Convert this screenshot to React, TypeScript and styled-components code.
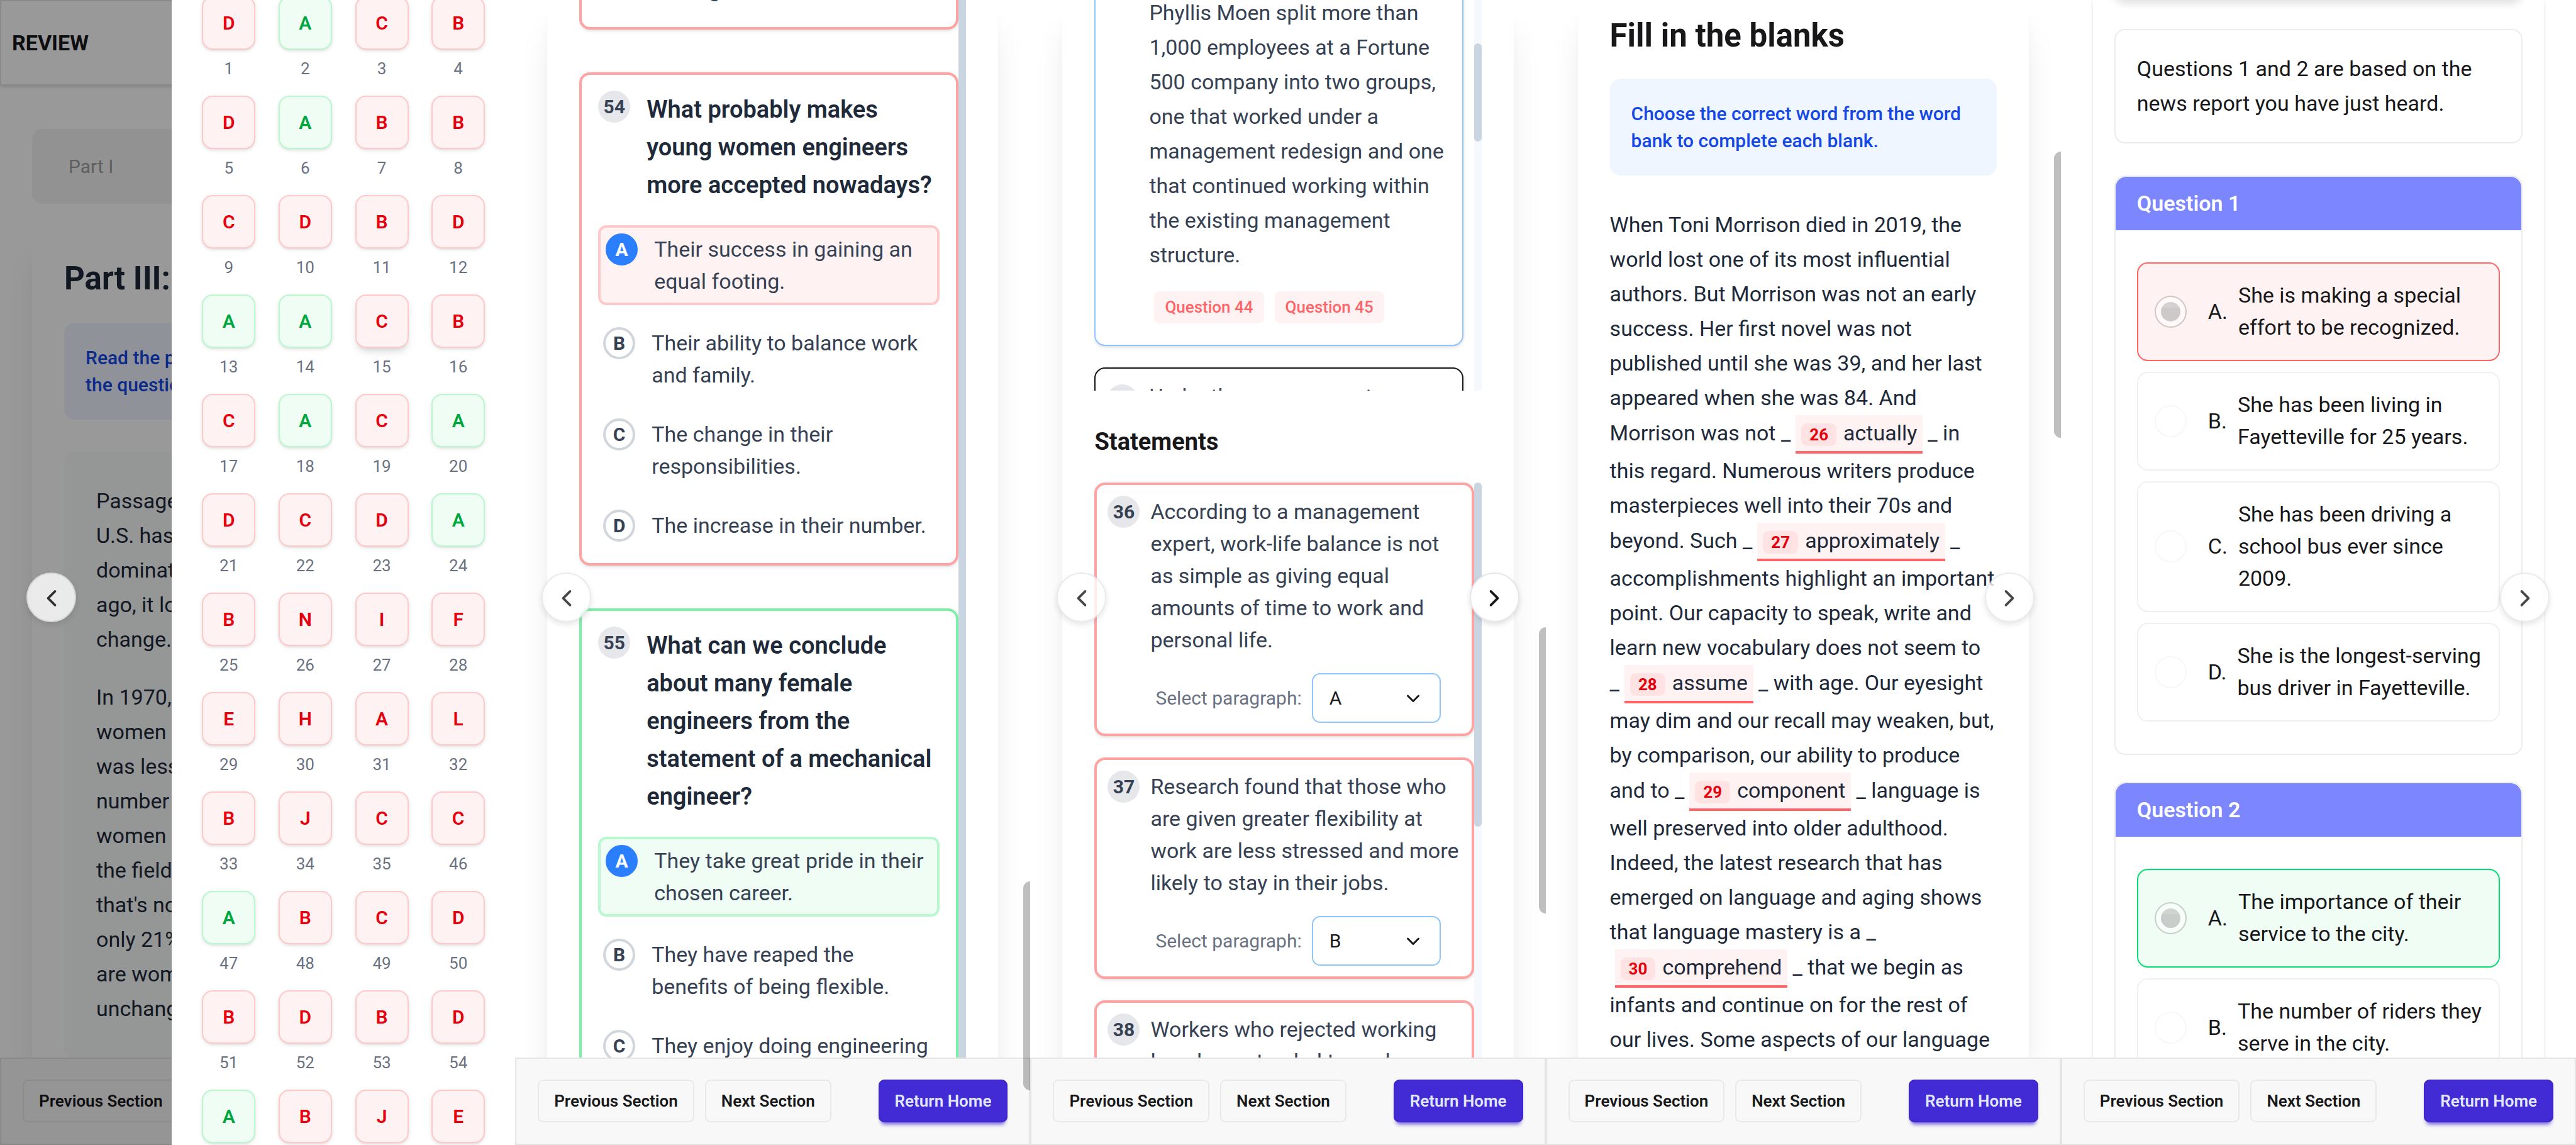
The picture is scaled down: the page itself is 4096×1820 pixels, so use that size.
import React from 'react';
import styled, { createGlobalStyle, css } from 'styled-components';

type Tone = 'wrong' | 'right' | 'plain';

const ink = {
  base: '#18181b',
  heading: '#1e2939',
  body: '#364153',
  muted: '#6a7282',
};

const GlobalStyle = createGlobalStyle`
  * { box-sizing: border-box; }
  body {
    margin: 0;
    background: #ffffff;
    color: ${ink.base};
    font-family: Roboto, "Liberation Sans", sans-serif;
    font-size: 34px;
    line-height: 55px;
  }
  h1, h2, h3, p { margin: 0; }
  button, select, input { font-family: inherit; margin: 0; }
`;

const softShadow = '0 2px 6px rgba(0,0,0,.1), 0 2px 4px -2px rgba(0,0,0,.1)';

/* ---------- page frame ---------- */

const Board = styled.main`
  display: grid;
  grid-template-columns: repeat(5, minmax(0, 1fr));
  height: 100vh;
  overflow: hidden;
`;

const Screen = styled.section`
  position: relative;
  display: flex;
  flex-direction: column;
  min-width: 0;
  height: 100vh;
  overflow: hidden;
`;

const View = styled.div`
  flex: 1;
  min-height: 0;
  overflow: hidden;
  display: flex;
  flex-direction: column;
`;

const Sheet = styled.div<{ $flat?: boolean; $rounded?: boolean }>`
  flex: 1 0 auto;
  margin: 0 51px;
  padding: 0 ${p => (p.$flat ? 34 : 51)}px;
  background: #fff;
  border-radius: ${p => (p.$rounded ? '34px 34px 0 0' : '0')};
  box-shadow: ${p =>
    p.$flat
      ? '0 2px 6px rgba(0,0,0,.1), 0 2px 4px -2px rgba(0,0,0,.1)'
      : '0 43px 53px -11px rgba(0,0,0,.1), 0 17px 21px -13px rgba(0,0,0,.1)'};
`;

const Footer = styled.footer`
  display: flex;
  align-items: center;
  gap: 17px;
  padding: 33px 34px 34px;
  background: #f8f8f8;
  border: 2px solid #e5e5e5;
`;

const FootButton = styled.button<{ $primary?: boolean }>`
  height: 68px;
  padding: 0 24px;
  border: 2px solid #e9e9ea;
  border-radius: 9px;
  background: #f8f8f8;
  color: ${ink.base};
  font-size: 26px;
  font-weight: 600;
  line-height: 34px;
  white-space: nowrap;
  ${p =>
    p.$primary &&
    css`
      margin-left: auto;
      background: #422ad5;
      border-color: #3d27c6;
      color: #e0e7ff;
      box-shadow: 0 6px 6px -4px rgba(66, 42, 213, .6), 0 8px 6px -5px rgba(66, 42, 213, .4);
    `}
`;

const RoundNav = styled.button<{ $side: 'left' | 'right'; $active?: boolean }>`
  position: absolute;
  top: 910px;
  ${p => p.$side}: 42px;
  display: grid;
  place-items: center;
  width: 79px;
  height: 79px;
  padding: 0;
  border: 2px solid #e5e7eb;
  border-radius: 50%;
  background: #fff;
  color: ${ink.base};
  opacity: ${p => (p.$active ? 1 : 0.8)};
  box-shadow: 0 4px 8px rgba(0,0,0,.12);
  z-index: 3;
`;

const Grip = styled.div<{ $top: number; $height: number }>`
  position: absolute;
  right: 0;
  top: ${p => p.$top}px;
  width: 11px;
  height: ${p => p.$height}px;
  border-radius: 11px 0 0 11px;
  background: rgba(0, 0, 0, .25);
  z-index: 3;
`;

const Chevron = ({ dir }: { dir: 'left' | 'right' }) => (
  <svg
    width="44"
    height="44"
    viewBox="0 0 24 24"
    fill="none"
    stroke="currentColor"
    strokeWidth="2"
    strokeLinecap="round"
    strokeLinejoin="round"
  >
    <path d={dir === 'left' ? 'M15 6.500l-6 6 6 6' : 'M9 6.500l6 6-6 6'} />
  </svg>
);

const Nav = ({ side, active }: { side: 'left' | 'right'; active?: boolean }) => (
  <RoundNav $side={side} $active={active} aria-label={side === 'left' ? 'Previous part' : 'Next part'}>
    <Chevron dir={side} />
  </RoundNav>
);

const Actions = () => (
  <Footer>
    <FootButton>Previous Section</FootButton>
    <FootButton>Next Section</FootButton>
    <FootButton $primary>Return Home</FootButton>
  </Footer>
);

/* ---------- shared text blocks ---------- */

const Title = styled.h1<{ $tone?: string }>`
  font-size: 51px;
  line-height: 68px;
  font-weight: 700;
  color: ${p => p.$tone ?? ink.base};
  white-space: nowrap;
`;

const Notice = styled.p`
  padding: 34px;
  border-radius: 17px;
  background: #eff6ff;
  color: #1447e6;
  font-size: 30px;
  line-height: 43px;
  font-weight: 500;
`;

const Badge = styled.span`
  flex: none;
  width: 51px;
  height: 51px;
  border-radius: 50%;
  background: #e5e7eb;
  color: ${ink.body};
  font-size: 30px;
  font-weight: 700;
  line-height: 51px;
  text-align: center;
`;

const Track = styled.div`
  flex: none;
  width: 12px;
  background: #f5f9fd;
`;

const Thumb = styled.div<{ $offset: number; $height?: number }>`
  margin-top: ${p => p.$offset}px;
  height: ${p => (p.$height ? `${p.$height}px` : '100%')};
  border-radius: ${p => (p.$height ? '6px' : '0')};
  background: #cad5e2;
`;

/* ---------- screen 1: answer drawer ---------- */

const TopBar = styled.header`
  padding: 38px 17px;
  border: 2px solid #e5e5e5;
  background: #fff;
  box-shadow: ${softShadow};
  font-weight: 700;
  line-height: 56px;
`;

const TabStrip = styled.div`
  margin: 69px 51px 36px;
  padding: 34px 58px;
  border-radius: 17px;
  background: #f3f3f3;
  color: #9e9e9e;
  font-size: 30px;
  line-height: 51px;
`;

const ReadingHead = styled.div`
  padding: 49px 0 36px;
`;

const Reading = styled.div`
  margin-top: 51px;
  padding: 51px;
  border-radius: 17px;
  background: #f9fafb;
  color: ${ink.heading};
`;

const Lines = styled.p`
  white-space: pre;
  & + & { margin-top: 37px; }
`;

const Dim = styled.div`
  position: absolute;
  inset: 0;
  background: rgba(0, 0, 0, .4);
  z-index: 2;
`;

const Drawer = styled.aside`
  position: absolute;
  top: 0;
  right: 0;
  bottom: 0;
  width: 546px;
  padding: 0 48px;
  background: #fff;
  overflow: hidden;
  z-index: 4;
`;

const AnswerGrid = styled.div`
  display: grid;
  grid-template-columns: repeat(4, 85px);
  justify-content: space-between;
  row-gap: 26px;
  margin-top: -6px;
`;

const AnswerCell = styled.label`
  display: grid;
  row-gap: 13px;
  justify-items: center;
  color: ${ink.muted};
  font-size: 26px;
  line-height: 34px;
`;

const AnswerKey = styled.button<{ $tone: Tone; $lifted: boolean }>`
  width: 85px;
  height: 85px;
  padding: 0;
  border-radius: 17px;
  font-size: 30px;
  font-weight: 600;
  border: 2px solid ${p => (p.$tone === 'right' ? '#b9f8cf' : '#ffc9c9')};
  background: ${p => (p.$tone === 'right' ? '#f0fdf4' : '#fef2f2')};
  color: ${p => (p.$tone === 'right' ? '#00a63e' : '#e7000b')};
  box-shadow: ${p => (p.$lifted ? '0 8px 13px -2px rgba(0,0,0,.12), 0 4px 8px -4px rgba(0,0,0,.12)' : softShadow)};
`;

const answers: [number, string, boolean][] = (
  [
    ['D', 'A+', 'C', 'B'], ['D', 'A+', 'B', 'B'], ['C', 'D', 'B', 'D'], ['A+', 'A+', 'C', 'B'],
    ['C', 'A+', 'C', 'A+'], ['D', 'C', 'D', 'A+'], ['B', 'N', 'I', 'F'], ['E', 'H', 'A', 'L'],
    ['B', 'J', 'C', 'C'], ['A+', 'B', 'C', 'D'], ['B', 'D', 'B', 'D'], ['A+', 'B', 'J', 'E'],
  ] as string[][]
)
  .flat()
  .map((key, i) => {
    const id = i < 35 ? i + 1 : i < 44 ? i + 11 : i === 44 ? 55 : i - 9;
    return [id, key[0], key.endsWith('+')];
  });

const AnswerScreen = () => (
  <Screen>
    <View>
      <TopBar>REVIEW</TopBar>
      <TabStrip>Part I</TabStrip>
      <Sheet $rounded>
        <ReadingHead>
          <Title $tone={ink.heading}>Part III:</Title>
        </ReadingHead>
        <Notice>
          Read the passages and answer
          <br />
          the questions.
        </Notice>
        <Reading>
          <Lines>{'Passage One\nU.S. has been\ndominated\nago, it looked\nchange.'}</Lines>
          <Lines>
            {"In 1970,\nwomen in\nwas less\nnumber of\nwomen in\nthe field\nthat's not\nonly 21%\nare women\nunchanged"}
          </Lines>
        </Reading>
      </Sheet>
    </View>
    <Actions />
    <Dim />
    <Nav side="left" />
    <Drawer>
      <AnswerGrid>
        {answers.map(([id, key, ok]) => (
          <AnswerCell key={id}>
            <AnswerKey $tone={ok ? 'right' : 'wrong'} $lifted={id === 15}>{key}</AnswerKey>
            {id}
          </AnswerCell>
        ))}
      </AnswerGrid>
    </Drawer>
  </Screen>
);

/* ---------- screen 2: reading questions ---------- */

const ScrollPair = styled.div<{ $height?: number }>`
  display: flex;
  overflow: hidden;
  height: ${p => (p.$height ? `${p.$height}px` : 'auto')};
`;

const CardStack = styled.div<{ $gap: number; $inset?: number; $shift?: number }>`
  flex: 1;
  min-width: 0;
  display: flex;
  flex-direction: column;
  gap: ${p => p.$gap}px;
  padding-right: ${p => p.$inset ?? 0}px;
  margin-top: ${p => p.$shift ?? 0}px;
`;

const QuestionCard = styled.article<{ $tone: Tone }>`
  flex: none;
  padding: 25px 26px 26px;
  border: 4px solid ${p => (p.$tone === 'right' ? '#7bf1a8' : '#ffa2a2')};
  border-radius: 17px;
  background: #fff;
  box-shadow: ${softShadow};
`;

const QuestionHead = styled.div`
  display: flex;
  gap: 26px;
  margin-bottom: 34px;
`;

const Prompt = styled.h3`
  font-size: 38px;
  line-height: 60px;
  font-weight: 600;
  color: ${ink.heading};
`;

const ChoiceList = styled.div`
  display: grid;
  gap: 26px;
`;

const Choice = styled.button<{ $picked?: Tone }>`
  display: flex;
  align-items: flex-start;
  gap: 26px;
  padding: 9px 8px 8px;
  border: ${p => (p.$picked ? `4px solid ${p.$picked === 'right' ? '#b9f8cf' : '#ffc9c9'}` : '0')};
  border-radius: 13px;
  background: ${p => (p.$picked ? (p.$picked === 'right' ? '#f0fdf4' : '#fef2f2') : 'transparent')};
  color: ${ink.body};
  font-size: 34px;
  line-height: 51px;
  text-align: left;
`;

const Letter = styled.span<{ $on: boolean }>`
  flex: none;
  width: 51px;
  height: 51px;
  border: 4px solid ${p => (p.$on ? '#2b7fff' : '#d1d5dc')};
  border-radius: 50%;
  background: ${p => (p.$on ? '#2b7fff' : '#fff')};
  color: ${p => (p.$on ? '#fff' : ink.body)};
  font-size: 30px;
  font-weight: 700;
  line-height: 43px;
  text-align: center;
`;

const Question = ({ id, tone, prompt, choices }: { id: number; tone: Tone; prompt: string; choices: string[] }) => (
  <QuestionCard $tone={tone}>
    <QuestionHead>
      <Badge>{id}</Badge>
      <Prompt>{prompt}</Prompt>
    </QuestionHead>
    <ChoiceList>
      {choices.map((text, i) => (
        <Choice key={text} $picked={i === 0 ? tone : undefined}>
          <Letter $on={i === 0}>{'ABCD'[i]}</Letter>
          <span>{text}</span>
        </Choice>
      ))}
    </ChoiceList>
  </QuestionCard>
);

const QuestionScreen = () => (
  <Screen>
    <View>
      <Sheet>
        <ScrollPair>
          <CardStack $gap={68} $shift={-131}>
            <QuestionCard $tone="wrong">
              <ChoiceList>
                <Choice>
                  <Letter $on={false}>D</Letter>
                  <span>
                    They were
                    <br />
                    waiting
                  </span>
                </Choice>
              </ChoiceList>
            </QuestionCard>
            <Question
              id={54}
              tone="wrong"
              prompt="What probably makes young women engineers more accepted nowadays?"
              choices={[
                'Their success in gaining an equal footing.',
                'Their ability to balance work and family.',
                'The change in their responsibilities.',
                'The increase in their number.',
              ]}
            />
            <Question
              id={55}
              tone="right"
              prompt="What can we conclude about many female engineers from the statement of a mechanical engineer?"
              choices={[
                'They take great pride in their chosen career.',
                'They have reaped the benefits of being flexible.',
                'They enjoy doing engineering',
              ]}
            />
          </CardStack>
          <Track>
            <Thumb $offset={0} />
          </Track>
        </ScrollPair>
      </Sheet>
    </View>
    <Actions />
    <Nav side="left" />
    <Grip $top={1401} $height={332} />
  </Screen>
);

/* ---------- screen 3: paragraph matching ---------- */

const ParagraphCard = styled.article<{ $edge: string }>`
  flex: none;
  display: flex;
  gap: 17px;
  padding: 17px 17px 34px;
  border: 2px solid ${p => p.$edge};
  border-radius: 17px;
  background: #fff;
  box-shadow: ${softShadow};
  color: ${ink.body};
  > ${Badge} { margin-top: 8px; }
`;

const ParagraphBody = styled.div<{ $indent?: boolean }>`
  flex: 1;
  min-width: 0;
  padding-left: ${p => (p.$indent ? 68 : 0)}px;
`;

const ChipRow = styled.div`
  display: flex;
  gap: 17px;
  margin: 30px 0 0 8px;
`;

const Chip = styled.a`
  padding: 8px 17px 9px;
  border-radius: 9px;
  background: #fef2f2;
  color: #ff6467;
  font-size: 26px;
  line-height: 34px;
  font-weight: 500;
  text-decoration: none;
`;

const Subhead = styled.h2`
  margin: 51px 0 35px;
  font-size: 38px;
  line-height: 60px;
  font-weight: 700;
`;

const StatementCard = styled.article`
  flex: none;
  display: flex;
  gap: 17px;
  padding: 17px;
  border: 4px solid #ffa2a2;
  border-radius: 17px;
  background: #fff;
  box-shadow: ${softShadow};
  color: ${ink.body};
  line-height: 51px;
`;

const StatementBody = styled.div`
  flex: 1;
  min-width: 0;
  margin-right: -9px;
`;

const PickRow = styled.label`
  display: flex;
  align-items: center;
  gap: 16px;
  margin: 27px 0 0 8px;
  color: ${ink.muted};
  font-size: 30px;
  line-height: 43px;
  white-space: nowrap;
`;

const PickBox = styled.span`
  display: grid;
  align-items: center;
  width: 205px;
  > * { grid-area: 1 / 1; }
  > svg { justify-self: end; margin-right: 30px; pointer-events: none; color: ${ink.base}; }
`;

const Pick = styled.select`
  width: 100%;
  height: 79px;
  padding: 0 26px;
  border: 2px solid #8ec5ff;
  border-radius: 13px;
  background: #fff;
  color: ${ink.base};
  font-size: 30px;
  appearance: none;
`;

const Statement = ({ id, text, value }: { id: number; text: string; value: string }) => (
  <StatementCard>
    <Badge>{id}</Badge>
    <StatementBody>
      <p>{text}</p>
      <PickRow>
        Select paragraph:
        <PickBox>
          <Pick defaultValue={value}>
            {['A', 'B', 'C', 'D'].map(v => (
              <option key={v}>{v}</option>
            ))}
          </Pick>
          <svg
            width="28"
            height="28"
            viewBox="0 0 28 28"
            fill="none"
            stroke="currentColor"
            strokeWidth="3"
            strokeLinecap="round"
            strokeLinejoin="round"
          >
            <path d="M5.500 10l8.500 8.500 8.500-8.500" />
          </svg>
        </PickBox>
      </PickRow>
    </StatementBody>
  </StatementCard>
);

const MatchScreen = () => (
  <Screen>
    <View>
      <Sheet>
        <ScrollPair $height={621}>
          <CardStack $gap={34} $inset={17} $shift={-26}>
            <ParagraphCard $edge="#8ec5ff">
              <ParagraphBody $indent>
                <p>
                  Phyllis Moen split more than 1,000 employees at a Fortune 500 company into two groups, one that
                  worked under a management redesign and one that continued working within the existing management
                  structure.
                </p>
                <ChipRow>
                  <Chip href="#q44">Question 44</Chip>
                  <Chip href="#q45">Question 45</Chip>
                </ChipRow>
              </ParagraphBody>
            </ParagraphCard>
            <ParagraphCard $edge={ink.base}>
              <Badge />
              <ParagraphBody>Under the management</ParagraphBody>
            </ParagraphCard>
          </CardStack>
          <Track>
            <Thumb $offset={69} $height={156} />
          </Track>
        </ScrollPair>
        <Subhead>Statements</Subhead>
        <ScrollPair>
          <CardStack $gap={34}>
            <Statement
              id={36}
              value="A"
              text="According to a management expert, work-life balance is not as simple as giving equal amounts of time to work and personal life."
            />
            <Statement
              id={37}
              value="B"
              text="Research found that those who are given greater flexibility at work are less stressed and more likely to stay in their jobs."
            />
            <Statement id={38} value="C" text="Workers who rejected working long hours tended to seek" />
          </CardStack>
          <Track>
            <Thumb $offset={0} $height={547} />
          </Track>
        </ScrollPair>
      </Sheet>
    </View>
    <Actions />
    <Nav side="left" />
    <Nav side="right" active />
    <Grip $top={997} $height={455} />
  </Screen>
);

/* ---------- screen 4: fill in the blanks ---------- */

const BlankHead = styled.div`
  padding: 23px 0 34px;
`;

const Cloze = styled.p`
  margin-top: 51px;
  color: ${ink.heading};
`;

const Filled = styled.span`
  display: inline-block;
  margin: 0 8px;
  padding: 0 9px;
  border-bottom: 4px solid #ff6467;
  background: #fef2f2;
  line-height: 57px;
`;

const FilledNo = styled.span`
  margin-right: 11px;
  padding: 3px 13px;
  border-radius: 9px;
  background: #ffe2e2;
  color: #e7000b;
  font-size: 26px;
  font-weight: 700;
  line-height: 34px;
`;

const Blank = ({ no, children }: { no: number; children: string }) => (
  <Filled>
    <FilledNo>{no}</FilledNo>
    {children}
  </Filled>
);

const ClozeScreen = () => (
  <Screen>
    <View>
      <Sheet>
        <BlankHead>
          <Title>Fill in the blanks</Title>
        </BlankHead>
        <Notice>Choose the correct word from the word bank to complete each blank.</Notice>
        <Cloze>
          When Toni Morrison died in 2019, the world lost one of its most influential authors. But Morrison was not an
          early success. Her first novel was not published until she was 39, and her last appeared when she was 84. And
          Morrison was not _<Blank no={26}>actually</Blank>_ in this regard. Numerous writers produce masterpieces well
          into their 70s and beyond. Such _<Blank no={27}>approximately</Blank>_ accomplishments highlight an important
          point. Our capacity to speak, write and learn new vocabulary does not seem to
          <br />_<Blank no={28}>assume</Blank>_ with age. Our eyesight may dim and our recall may weaken, but, by
          comparison, our ability to produce and to _<Blank no={29}>component</Blank>_ language is well preserved into
          older adulthood. Indeed, the latest research that has emerged on language and aging shows that language
          mastery is a _<Blank no={30}>comprehend</Blank>_ that we begin as infants and continue on for the rest of our
          lives. Some aspects of our language
        </Cloze>
      </Sheet>
    </View>
    <Actions />
    <Nav side="right" />
    <Grip $top={241} $height={455} />
  </Screen>
);

/* ---------- screen 5: listening ---------- */

const Player = styled.div`
  height: 68px;
  margin-top: -68px;
  border-radius: 17px;
  background: #fff;
  box-shadow: 0 6px 13px rgba(0, 0, 0, .12);
`;

const Intro = styled.p`
  margin-top: 46px;
  padding: 34px;
  border: 2px solid #ececee;
  border-radius: 17px;
`;

const QuizCard = styled.fieldset<{ $top: number }>`
  min-width: 0;
  margin: ${p => p.$top}px 0 0;
  padding: 0;
  border: 2px solid #ececee;
  border-radius: 17px;
  overflow: hidden;
`;

const QuizHead = styled.h3`
  padding: 17px 34px;
  background: #7c86ff;
  color: #fff;
  font-size: 34px;
  line-height: 51px;
  font-weight: 600;
`;

const QuizBody = styled.div`
  display: grid;
  gap: 17px;
  padding: 51px 34px;
`;

const QuizOption = styled.label<{ $tone: Tone }>`
  display: flex;
  align-items: center;
  padding: 25px 22px 26px 26px;
  border: 2px solid ${p => (p.$tone === 'plain' ? '#f0f0f1' : p.$tone === 'right' ? '#05df72' : '#ff6467')};
  border-radius: 17px;
  background: ${p => (p.$tone === 'plain' ? '#fff' : p.$tone === 'right' ? '#f0fdf4' : '#fef2f2')};
  line-height: 51px;
`;

const Radio = styled.input`
  appearance: none;
  flex: none;
  width: 51px;
  height: 51px;
  margin-right: 34px;
  padding: 8px;
  border: 2px solid #f7f7f8;
  border-radius: 50%;
  &:checked {
    border-color: rgba(24, 24, 27, .2);
    background:
      linear-gradient(rgba(24, 24, 27, .18) 30%, rgba(24, 24, 27, .21) 30%) content-box,
      linear-gradient(rgba(255, 255, 255, .5), rgba(255, 255, 255, .5)) padding-box;
  }
`;

const OptionLetter = styled.span`
  margin-right: 17px;
`;

const Quiz = ({ no, top, tone, options }: { no: number; top: number; tone: Tone; options: string[] }) => (
  <QuizCard $top={top}>
    <QuizHead>Question {no}</QuizHead>
    <QuizBody>
      {options.map((text, i) => (
        <QuizOption key={text} $tone={i === 0 ? tone : 'plain'}>
          <Radio type="radio" name={`quiz-${no}`} defaultChecked={i === 0} disabled />
          <OptionLetter>{'ABCD'[i]}.</OptionLetter>
          <span>{text}</span>
        </QuizOption>
      ))}
    </QuizBody>
  </QuizCard>
);

const ListeningScreen = () => (
  <Screen>
    <View>
      <Sheet $flat>
        <Player />
        <Intro>Questions 1 and 2 are based on the news report you have just heard.</Intro>
        <Quiz
          no={1}
          top={51}
          tone="wrong"
          options={[
            'She is making a special effort to be recognized.',
            'She has been living in Fayetteville for 25 years.',
            'She has been driving a school bus ever since 2009.',
            'She is the longest-serving bus driver in Fayetteville.',
          ]}
        />
        <Quiz
          no={2}
          top={43}
          tone="right"
          options={['The importance of their service to the city.', 'The number of riders they serve in the city.']}
        />
      </Sheet>
    </View>
    <Actions />
    <Nav side="right" />
  </Screen>
);

export default function App() {
  return (
    <>
      <GlobalStyle />
      <Board>
        <AnswerScreen />
        <QuestionScreen />
        <MatchScreen />
        <ClozeScreen />
        <ListeningScreen />
      </Board>
    </>
  );
}
